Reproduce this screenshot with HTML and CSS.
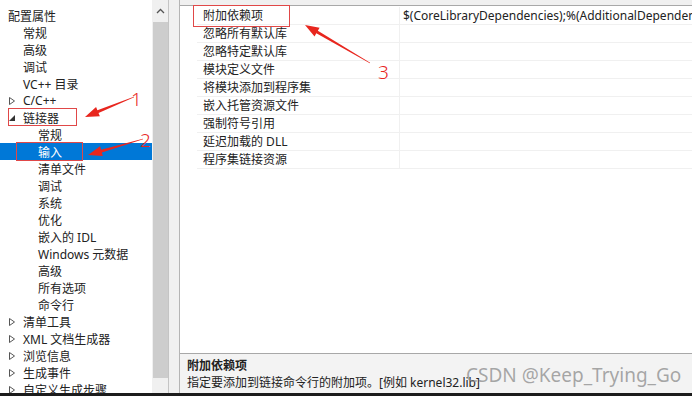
FILE: index.html
```html
<!DOCTYPE html>
<html lang="zh-CN">
<head>
    <meta charset="UTF-8">
    <title>链接器 - 输入</title>
    <link rel="stylesheet" href="styles.css">
</head>
<body>
<div class="window">
    <div class="main">
        <div class="tree-pane">
            <div class="tree">
                <div class="row l0"><span class="tog"><svg width="6" height="6"><polygon points="6,0 6,6 0,6" fill="#333"/></svg></span>配置属性</div>
                <div class="row l1"><span class="tog"></span>常规</div>
                <div class="row l1"><span class="tog"></span>高级</div>
                <div class="row l1"><span class="tog"></span>调试</div>
                <div class="row l1"><span class="tog"></span>VC++ 目录</div>
                <div class="row l1"><span class="tog"><svg width="6" height="8"><polygon points="0.5,0.5 5.5,4 0.5,7.5" fill="none" stroke="#555"/></svg></span>C/C++</div>
                <div class="row l1"><span class="tog"><svg width="6" height="6"><polygon points="6,0 6,6 0,6" fill="#333"/></svg></span>链接器</div>
                <div class="row l2"><span class="tog"></span>常规</div>
                <div class="row l2 selected"><span class="tog"></span>输入</div>
                <div class="row l2"><span class="tog"></span>清单文件</div>
                <div class="row l2"><span class="tog"></span>调试</div>
                <div class="row l2"><span class="tog"></span>系统</div>
                <div class="row l2"><span class="tog"></span>优化</div>
                <div class="row l2"><span class="tog"></span>嵌入的 IDL</div>
                <div class="row l2"><span class="tog"></span>Windows 元数据</div>
                <div class="row l2"><span class="tog"></span>高级</div>
                <div class="row l2"><span class="tog"></span>所有选项</div>
                <div class="row l2"><span class="tog"></span>命令行</div>
                <div class="row l1"><span class="tog"><svg width="6" height="8"><polygon points="0.5,0.5 5.5,4 0.5,7.5" fill="none" stroke="#555"/></svg></span>清单工具</div>
                <div class="row l1"><span class="tog"><svg width="6" height="8"><polygon points="0.5,0.5 5.5,4 0.5,7.5" fill="none" stroke="#555"/></svg></span>XML 文档生成器</div>
                <div class="row l1"><span class="tog"><svg width="6" height="8"><polygon points="0.5,0.5 5.5,4 0.5,7.5" fill="none" stroke="#555"/></svg></span>浏览信息</div>
                <div class="row l1"><span class="tog"><svg width="6" height="8"><polygon points="0.5,0.5 5.5,4 0.5,7.5" fill="none" stroke="#555"/></svg></span>生成事件</div>
                <div class="row l1"><span class="tog"><svg width="6" height="8"><polygon points="0.5,0.5 5.5,4 0.5,7.5" fill="none" stroke="#555"/></svg></span>自定义生成步骤</div>
            </div>
            <div class="scrollbar">
                <div class="scroll-up"><svg width="9" height="6"><polyline points="1,5 4.5,1.5 8,5" fill="none" stroke="#555" stroke-width="1.3"/></svg></div>
                <div class="thumb"></div>
            </div>
        </div>
        <div class="splitter"></div>
        <div class="props">
            <div class="grid">
                <div class="prop"><div class="name">附加依赖项</div><div class="value">$(CoreLibraryDependencies);%(AdditionalDependencies)</div></div>
                <div class="prop"><div class="name">忽略所有默认库</div><div class="value"></div></div>
                <div class="prop"><div class="name">忽略特定默认库</div><div class="value"></div></div>
                <div class="prop"><div class="name">模块定义文件</div><div class="value"></div></div>
                <div class="prop"><div class="name">将模块添加到程序集</div><div class="value"></div></div>
                <div class="prop"><div class="name">嵌入托管资源文件</div><div class="value"></div></div>
                <div class="prop"><div class="name">强制符号引用</div><div class="value"></div></div>
                <div class="prop"><div class="name">延迟加载的 DLL</div><div class="value"></div></div>
                <div class="prop"><div class="name">程序集链接资源</div><div class="value"></div></div>
            </div>
            <div class="desc">
                <div class="desc-title">附加依赖项</div>
                <div class="desc-text">指定要添加到链接命令行的附加项。[例如 kernel32.lib]</div>
            </div>
        </div>
    </div>
    <div class="bottom-edge"></div>

    <svg class="marks" width="692" height="396">
        <rect x="8.5" y="108.5" width="68" height="17" fill="none" stroke="#e04848"/>
        <rect x="16.5" y="142.5" width="66" height="18" fill="none" stroke="#e04848"/>
        <rect x="193.5" y="5.5" width="96" height="21" fill="none" stroke="#e04848"/>
        <polygon points="133.89,96.72 97.39,110.32 96.07,107.08 85,117 99.85,116.34 98.53,113.10 134.11,97.28" fill="#e8261e"/>
        <polygon points="142.92,138.71 101.02,149.65 100.05,146.29 88,155 102.84,155.89 101.86,152.53 143.08,139.29" fill="#e8261e"/>
        <polygon points="370.15,62.74 317.84,30.78 319.61,27.75 305,25 314.55,36.39 316.32,33.36 369.85,63.26" fill="#e8261e"/>
        <text x="131" y="106" class="num">1</text>
        <text x="140" y="147" class="num">2</text>
        <text x="378" y="79" class="num">3</text>
    </svg>
    <div class="watermark">CSDN @Keep_Trying_Go</div>
</div>
</body>
</html>
```

FILE: styles.css
```css
body {
    margin: 0;
    background-color: #f0f0f0;
    font-family: "Noto Sans", "Noto Sans CJK SC", sans-serif;
    font-size: 12px;
    color: #222;
}
.window {
    position: relative;
    width: 692px;
    height: 396px;
    overflow: hidden;
}
.main {
    display: flex;
    height: 393px;
}
.bottom-edge {
    height: 3px;
    background-color: #1c1c1c;
}

/* left tree */
.tree-pane {
    display: flex;
    flex-shrink: 0;
    width: 169px;
    border-right: 1px solid #c4c4c4;
    box-sizing: border-box;
    background-color: #fff;
}
.tree {
    width: 152px;
    padding-top: 7px;
    overflow: hidden;
}
.row {
    display: flex;
    align-items: center;
    height: 17px;
    white-space: nowrap;
}
.tog {
    display: inline-flex;
    align-items: center;
    width: 14px;
    flex-shrink: 0;
}
.l0 { padding-left: 0; }
.l0 .tog { margin-left: -6px; }
.l1 { padding-left: 9px; }
.l2 { padding-left: 24px; }
.row.selected {
    background-color: #0078d7;
    color: #fff;
}
.scrollbar {
    width: 16px;
    background-color: #f0f0f0;
    display: flex;
    flex-direction: column;
    align-items: center;
}
.scroll-up {
    height: 22px;
    display: flex;
    align-items: center;
    justify-content: center;
}
.thumb {
    width: 15px;
    height: 356px;
    background-color: #cdcdcd;
}
.splitter {
    width: 10px;
    flex-shrink: 0;
}

/* right side */
.props {
    flex: 1;
    min-width: 0;
    display: flex;
    flex-direction: column;
    border-left: 1px solid #b4b4b4;
    padding-top: 5px;
}
.grid {
    flex: 1;
    background-color: #fff;
    border-top: 1px solid #a8a8a8;
    padding: 1px 0 0 17px;
}
.prop {
    display: flex;
    height: 18px;
    box-sizing: border-box;
    border-bottom: 1px solid #f0f0f0;
    white-space: nowrap;
}
.prop .name {
    width: 203px;
    flex-shrink: 0;
    padding-left: 6px;
    box-sizing: border-box;
    border-right: 1px solid #f0f0f0;
    line-height: 17px;
}
.prop .value {
    flex: 1;
    min-width: 0;
    padding-left: 3px;
    line-height: 17px;
    overflow: hidden;
}
.desc {
    height: 40px;
    box-sizing: border-box;
    border-top: 1px solid #a8a8a8;
    background-color: #f3f3f3;
    padding: 3px 7px;
    line-height: 17px;
    white-space: nowrap;
}
.desc-title {
    font-weight: bold;
}

/* annotations */
.marks {
    position: absolute;
    left: 0;
    top: 0;
    pointer-events: none;
}
.num {
    fill: #e8261e;
    font-family: "Noto Sans", sans-serif;
    font-weight: 300;
    font-size: 19px;
}
.watermark {
    position: absolute;
    left: 466px;
    top: 362px;
    font-size: 19px;
    font-family: "Noto Sans", sans-serif;
    color: rgba(140, 140, 140, 0.75);
    white-space: nowrap;
}
```
